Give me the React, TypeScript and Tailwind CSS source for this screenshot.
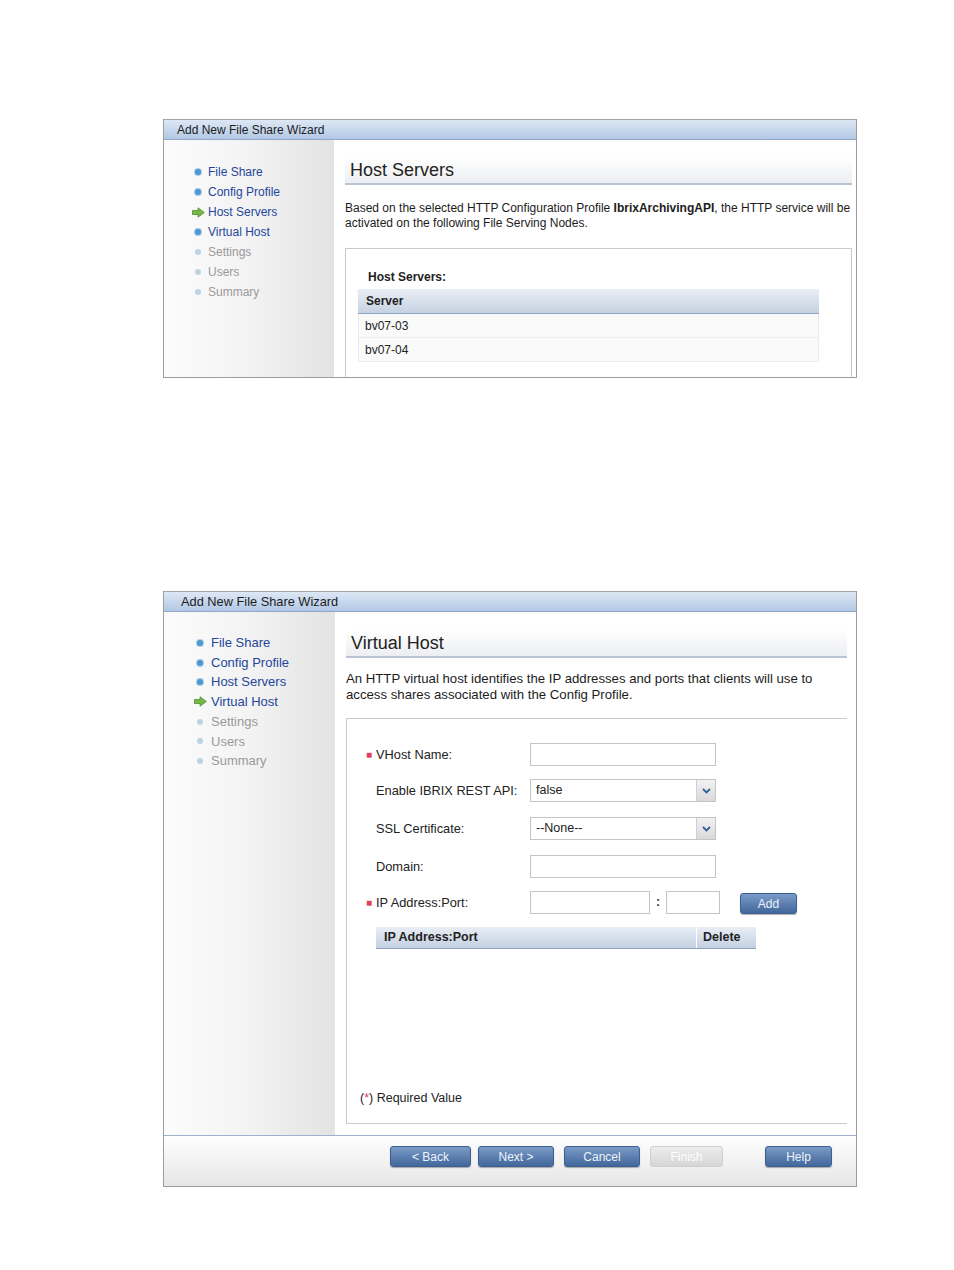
const steps = [
  { name: "File Share", state: "done" },
  { name: "Config Profile", state: "done" },
  { name: "Host Servers", state: "todo" },
  { name: "Virtual Host", state: "todo" },
  { name: "Settings", state: "off" },
  { name: "Users", state: "off" },
  { name: "Summary", state: "off" },
];

function GreenArrow() {
  return (
    <svg width="13" height="11" viewBox="0 0 13 11">
      <path
        d="M0.5 3.5 H6 V0.8 L12.3 5.5 L6 10.2 V7.5 H0.5 Z"
        fill="#74b84a"
        stroke="#4e8f2c"
        strokeWidth="0.8"
      />
    </svg>
  );
}

function Bullet({ off }: { off?: boolean }) {
  return (
    <div
      className={`w-[6px] h-[6px] rounded-full ${
        off ? "bg-[#bcd3e3]" : "bg-[#4f97cf] ring-1 ring-[#a9cde9]"
      }`}
    />
  );
}

function Sidebar({ current, rowH, bulletW }: { current: string; rowH: string; bulletW: string }) {
  return (
    <div className="flex flex-col">
      {steps.map((s) => {
        const off = s.state === "off" && s.name !== current;
        return (
          <div key={s.name} className={`flex items-center ${rowH}`}>
            <div className={`${bulletW} flex items-center justify-center`}>
              {s.name === current ? <GreenArrow /> : <Bullet off={off} />}
            </div>
            <span className={off ? "text-[#9a9a9a]" : "text-[#24469a]"}>{s.name}</span>
          </div>
        );
      })}
    </div>
  );
}

function TitleBar({ pad, size }: { pad: string; size: string }) {
  return (
    <div
      className={`h-[21px] flex items-center pt-[1px] ${pad} ${size} border-t border-[#a5a5a5] border-b border-b-[#8fa8c8] bg-gradient-to-b from-[#dde8f5] to-[#b2c8e4] text-[#1c1c1c]`}
    >
      Add New File Share Wizard
    </div>
  );
}

function SectionHeader({ text }: { text: string }) {
  return (
    <div className="h-[28px] flex items-center pl-[5px] bg-gradient-to-b from-white to-[#eceef1] border-b-2 border-[#b9c4d3] text-[18px] text-[#222]">
      {text}
    </div>
  );
}

function Select({ value }: { value: string }) {
  return (
    <div className="w-[186px] h-[23px] flex border border-[#c4c4c4] bg-white">
      <div className="flex-1 pl-[5px] flex items-center text-[#222]">{value}</div>
      <div className="w-[19px] flex items-center justify-center bg-gradient-to-b from-[#f2f2f2] to-[#d9d9d9] border-l border-[#d0d0d0]">
        <svg width="9" height="6" viewBox="0 0 9 6">
          <path d="M1 1 L4.5 4.5 L8 1" fill="none" stroke="#35609c" strokeWidth="1.8" />
        </svg>
      </div>
    </div>
  );
}

function Input({ w }: { w: string }) {
  return <div className={`${w} h-[23px] border border-[#c4c4c4] bg-white`} />;
}

function Btn({ label, disabled }: { label: string; disabled?: boolean }) {
  return (
    <div
      className={`h-[21px] flex items-center justify-center rounded-[3px] text-[12px] ${
        disabled
          ? "text-white bg-gradient-to-b from-[#ececec] to-[#d6d6d6] border border-[#cfcfcf]"
          : "text-[#eef3fa] bg-gradient-to-b from-[#7b9bc8] to-[#42679b] border border-[#3b5f91] shadow-[0_1px_1px_rgba(0,0,0,0.3)]"
      }`}
    >
      {label}
    </div>
  );
}

function FormRow({ label, required, children }: { label: string; required?: boolean; children: React.ReactNode }) {
  return (
    <div className="flex items-center">
      <div className="w-[10px] text-[#e0405a] text-[10px]">{required ? "■" : ""}</div>
      <div className="w-[154px] text-[#222] text-[12.8px]">{label}</div>
      {children}
    </div>
  );
}

export default function App() {
  return (
    <div
      className="w-[954px] h-[1270px] bg-white pt-[119px] pl-[163px] text-[12px]"
      style={{ fontFamily: '"Liberation Sans", Arial, sans-serif' }}
    >
      {/* first wizard: Host Servers */}
      <div className="w-[694px] h-[259px] flex flex-col border-l border-b border-r border-[#9c9c9c] overflow-hidden">
        <TitleBar pad="pl-[13px]" size="text-[12px]" />
        <div className="flex flex-1">
          <div className="w-[170px] pt-[22px] pl-[24px] bg-gradient-to-r from-[#fcfcfc] via-[#f3f3f3] to-[#e3e3e3]">
            <Sidebar current="Host Servers" rowH="h-[20px]" bulletW="w-[20px]" />
          </div>
          <div className="flex-1 pl-[11px] pr-[4px] pt-[17px] bg-white">
            <SectionHeader text="Host Servers" />
            <p className="mt-[16px] leading-[15px] text-[#1c1c1c]">
              Based on the selected HTTP Configuration Profile <b>IbrixArchivingAPI</b>
              <span>, the HTTP service will be</span>
              <br />
              activated on the following File Serving Nodes.
            </p>
            <div className="mt-[17px] h-[200px] border border-[#c9c9c9] pl-[12px] pt-[21px]">
              <div className="pl-[10px] font-bold text-[#222] h-[14px] leading-[14px]">Host Servers:</div>
              <div className="w-[461px] mt-[5px]">
                <div className="h-[25px] flex items-center pl-[8px] font-bold text-[#222] bg-gradient-to-b from-[#e9eef5] to-[#c6d2e2] border-b border-[#8ea4c2]">
                  Server
                </div>
                {["bv07-03", "bv07-04"].map((r) => (
                  <div
                    key={r}
                    className="h-[24px] flex items-center pl-[6px] bg-[#fafafa] border-b border-x border-[#ececec] text-[#222]"
                  >
                    {r}
                  </div>
                ))}
              </div>
            </div>
          </div>
        </div>
      </div>

      {/* second wizard: Virtual Host */}
      <div className="mt-[213px] w-[694px] h-[596px] flex flex-col border-l border-b border-r border-[#9c9c9c] text-[12.5px]">
        <TitleBar pad="pl-[17px]" size="text-[12.8px]" />
        <div className="flex flex-1">
          <div className="w-[171px] pt-[21px] pl-[25px] text-[13px] bg-gradient-to-r from-[#fcfcfc] via-[#f3f3f3] to-[#e3e3e3]">
            <Sidebar current="Virtual Host" rowH="h-[19.7px]" bulletW="w-[22px]" />
          </div>
          <div className="flex-1 flex flex-col pl-[11px] pr-[9px] pt-[18px] bg-white">
            <SectionHeader text="Virtual Host" />
            <p className="mt-[13px] leading-[16px] text-[13.2px] text-[#1c1c1c]">
              An HTTP virtual host identifies the IP addresses and ports that clients will use to
              <br />
              access shares associated with the Config Profile.
            </p>
            <div className="mt-[15px] mb-[11px] flex-1 border-l border-t border-b border-[#c9c9c9] flex flex-col">
              <div className="pl-[19px] pt-[24px] flex flex-col gap-[13px]">
                <FormRow label="VHost Name:" required>
                  <Input w="w-[186px]" />
                </FormRow>
                <FormRow label="Enable IBRIX REST API:">
                  <Select value="false" />
                </FormRow>
                <div className="mt-[2px]">
                  <FormRow label="SSL Certificate:">
                    <Select value="--None--" />
                  </FormRow>
                </div>
                <div className="mt-[2px]">
                  <FormRow label="Domain:">
                    <Input w="w-[186px]" />
                  </FormRow>
                </div>
                <FormRow label="IP Address:Port:" required>
                  <Input w="w-[120px]" />
                  <span className="w-[16px] text-center font-bold text-[#333]">:</span>
                  <Input w="w-[54px]" />
                  <div className="ml-[20px] w-[57px] mt-[2px]">
                    <Btn label="Add" />
                  </div>
                </FormRow>
              </div>
              <div className="ml-[29px] mt-[13px] w-[380px] h-[22px] flex font-bold text-[#222] bg-gradient-to-b from-[#e9eef5] to-[#c4d0e1] border-b border-[#8ea4c2]">
                <div className="flex-1 flex items-center pl-[8px] border-r border-white">IP Address:Port</div>
                <div className="w-[59px] flex items-center pl-[6px]">Delete</div>
              </div>
              <div className="flex-1" />
              <div className="pl-[13px] pb-[15px] text-[#222]">
                (<span className="text-[#e0405a]">*</span>) Required Value
              </div>
            </div>
          </div>
        </div>
        <div className="h-[51px] border-t border-[#9fb2cc] bg-gradient-to-b from-white to-[#e6e6e6] flex pt-[10px]">
          <div className="ml-[226px] w-[81px]">
            <Btn label="< Back" />
          </div>
          <div className="ml-[7px] w-[76px]">
            <Btn label="Next >" />
          </div>
          <div className="ml-[10px] w-[76px]">
            <Btn label="Cancel" />
          </div>
          <div className="ml-[10px] w-[73px]">
            <Btn label="Finish" disabled />
          </div>
          <div className="ml-[42px] w-[67px]">
            <Btn label="Help" />
          </div>
        </div>
      </div>
    </div>
  );
}
